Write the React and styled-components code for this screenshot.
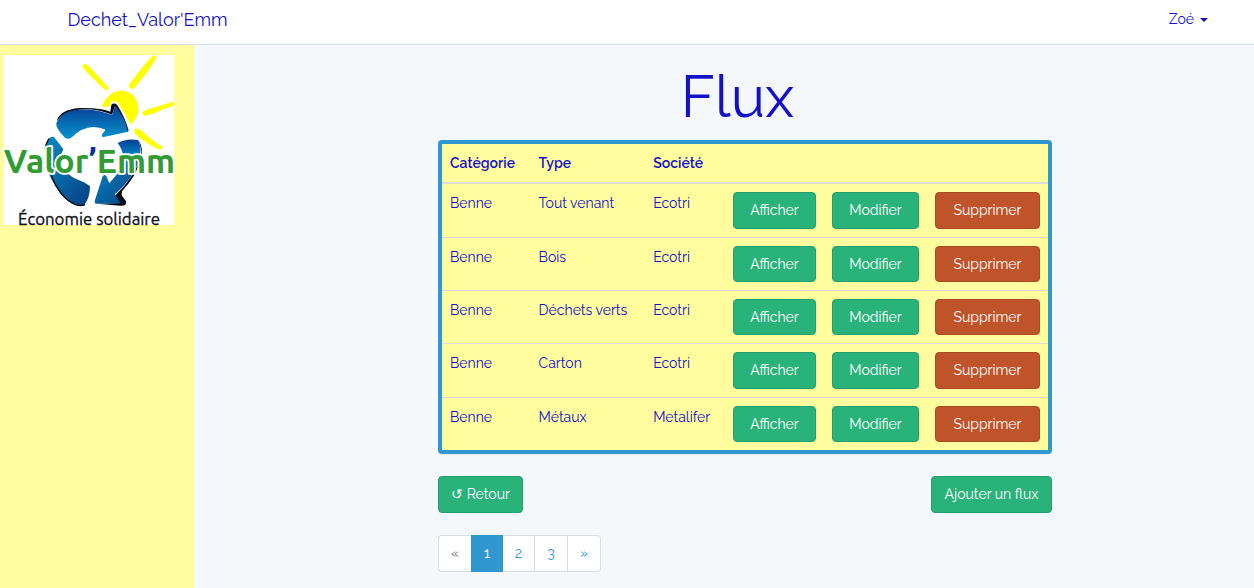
import React from "react";
import styled, { createGlobalStyle } from "styled-components";

const GlobalStyle = createGlobalStyle`
  *, *::before, *::after { box-sizing: border-box; }
  body {
    margin: 0;
    background: #f5f8fa;
    color: #1311cc;
    font-family: Raleway, Lato, "Open Sans", sans-serif;
    font-size: 14px;
    font-weight: 400;
    line-height: 1.6;
  }
`;

const Page = styled.div`
  display: flex;
  flex-direction: column;
  height: 588px;
  overflow: hidden;
`;

const Navbar = styled.header`
  display: flex;
  flex: none;
  align-items: flex-start;
  justify-content: space-between;
  height: 45px;
  padding: 5px 46px 0 67.5px;
  background: #fff;
  border-bottom: 1px solid #d3e0e9;
`;

const Brand = styled.a`
  font-size: 18px;
  line-height: 29px;
`;

const UserMenu = styled.a`
  display: flex;
  align-items: center;
  gap: 6px;
  line-height: 28px;
`;

const Caret = styled.span`
  border-top: 4px solid;
  border-left: 4px solid transparent;
  border-right: 4px solid transparent;
  margin-top: 2px;
`;

const Text = styled.span`
  white-space: nowrap;
`;

const Body = styled.div`
  display: flex;
  flex: 1;
`;

const Sidebar = styled.aside`
  width: 194px;
  padding: 10px 4px;
  background: #fffd9e;
`;

const Logo = styled.svg`
  display: block;
  width: 170px;
  height: 170px;
  background: #fff;
  overflow: visible;
`;

const Content = styled.main`
  width: 614px;
  margin-left: 244px;
`;

const Title = styled.h1`
  margin: 17px 0 8px;
  padding-right: 15px;
  font-size: 58px;
  font-weight: 400;
  line-height: 70px;
  text-align: center;
`;

const Panel = styled.section`
  height: 314px;
  border: 4px solid #3097d1;
  border-radius: 4px;
  background: #fffd9e;
  box-shadow: 0 1px 1px rgba(0, 0, 0, 0.05);
`;

const Table = styled.table`
  width: 606px;
  table-layout: fixed;
  border-collapse: collapse;
`;

const Col = styled.col`
  width: ${(p) => p.$w}px;
`;

const HeadCell = styled.th`
  padding: 8px;
  border-bottom: 2px solid #ddd;
  font-weight: 600;
  line-height: 22.4px;
  text-align: left;
`;

const Cell = styled.td`
  padding: 8px;
  border-top: 1px solid #ddd;
  line-height: 22.7px;
  vertical-align: top;
`;

const Button = styled.button`
  display: block;
  width: ${(p) => (p.$w ? `${p.$w}px` : "100%")};
  height: ${(p) => p.$h || 36.33}px;
  padding: ${(p) => (p.$h ? 0 : "0.25px 0 0")};
  border: 1px solid ${(p) => (p.$danger ? "#aa4a24" : "#259d6d")};
  border-radius: 4px;
  background: ${(p) => (p.$danger ? "#bf5329" : "#2ab27b")};
  color: #fff;
  font: inherit;
  text-align: center;
`;

const Actions = styled.div`
  display: flex;
  justify-content: space-between;
  margin: 22px 0;
`;

const Pagination = styled.ul`
  display: flex;
  width: 163px;
  height: 37px;
  margin: 0;
  padding: 0;
  list-style: none;
`;

const PageItem = styled.li`
  display: flex;
  align-items: center;
  justify-content: center;
  width: ${(p) => p.$w}px;
  border: 1px solid ${(p) => (p.$active ? "#3097d1" : "#ddd")};
  border-left-width: ${(p) => (p.$first || p.$active ? 1 : 0)}px;
  border-right-width: ${(p) => (p.$first ? 0 : 1)}px;
  border-radius: ${(p) => (p.$first ? "4px 0 0 4px" : p.$last ? "0 4px 4px 0" : 0)};
  background: ${(p) => (p.$active ? "#3097d1" : "#fff")};
  color: ${(p) => (p.$active ? "#fff" : p.$first ? "#777" : "#3097d1")};
`;

const rows = [
  ["Tout venant", "Ecotri"],
  ["Bois", "Ecotri"],
  ["Déchets verts", "Ecotri"],
  ["Carton", "Ecotri"],
  ["Métaux", "Metalifer"],
];

function ValorLogo() {
  return (
    <Logo viewBox="12 45 510 510">
      <defs>
        <linearGradient id="down" x1="0" y1="0" x2="0" y2="1">
          <stop offset="0" stopColor="#083f98" />
          <stop offset="1" stopColor="#0794cd" />
        </linearGradient>
        <linearGradient id="up" x1="0" y1="0" x2="1" y2="1">
          <stop offset="0" stopColor="#078bc6" />
          <stop offset="1" stopColor="#063e83" />
        </linearGradient>
      </defs>
      <g fill="#ff0" stroke="#ff0" strokeWidth="3" strokeLinejoin="round">
        <path d="M306 201 Q324 153 366 153 Q414 160 414 207 Q410 240 386 257 Q379 222 349 194 Q334 190 328 205Z" />
        <path d="M249 76 Q253 69 262 76 L324 142 Q325 150 316 149 Q284 121 250 83Z" />
        <path d="M456 50 Q465 42 468 51 Q452 87 402 142 Q392 150 387 138 Q402 112 456 50Z" />
        <path d="M429 215 Q475 199 520 187 L520 196 Q489 204 465 218 L434 226 Q424 223 429 215Z" />
        <path d="M404 269 Q412 263 424 273 Q451 301 485 320 Q488 327 479 328 Q438 311 405 279Z" />
      </g>
      <path d="M304 206 L334 202 L337 188 L350 190 L387 252 L390 277" fill="none" stroke="#fff" strokeWidth="8" />
      <g strokeLinejoin="round">
        <path fill="#050b15" d="M170 243 Q180 209 239 204 Q298 202 331 215 L334 194 Q342 187 351 194 Q373 227 386 271 L382 277 Q376 240 345 199 L336 224 Q285 204 235 209 Q190 216 170 243Z" />
        <path fill="url(#down)" d="M169 249 Q184 213 235 209 Q289 205 336 225 L345 199 Q374 230 384 275 L308 292 L305 284 L317 269 Q261 244 213 294 Q203 299 195 293 Q166 264 169 249Z" />
        <path fill="url(#up)" d="M144 298 Q152 288 162 291 L190 328 Q177 354 184 377 Q203 405 227 416 Q260 429 270 439 Q270 475 252 496 Q216 501 185 466 Q142 410 136 357 Q132 330 144 298Z" />
        <path fill="none" stroke="#050b15" strokeWidth="4" d="M136 328 Q138 306 148 296 M153 405 Q180 473 226 494 Q243 499 255 494" />
        <path fill="#050b15" d="M413 298 Q435 324 419 365 Q411 404 366 454 L365 466 L378 484 Q382 499 360 497 L291 491 L359 489 L344 469 Q404 409 421 355 Q427 323 413 298Z" />
        <path fill="url(#down)" d="M353 309 Q382 293 415 301 Q426 327 417 359 L370 359 Q371 333 353 309Z" />
        <path fill="url(#up)" d="M370 345 L419 353 Q404 411 344 463 L362 490 L289 491 Q282 491 285 480 L308 409 Q315 401 320 410 L328 430 Q370 386 370 345Z" />
      </g>
      <text x="11" y="399" textLength="514" lengthAdjust="spacingAndGlyphs" fontFamily="Ubuntu, Open Sans, sans-serif" fontWeight="700" fontSize="101" fill="#339b33" stroke="#fff" strokeWidth="11" strokeLinejoin="round" paintOrder="stroke">
        Valor<tspan fill="#082e9c">’</tspan>Emm
      </text>
      <text x="54" y="555" textLength="426" lengthAdjust="spacingAndGlyphs" fontFamily="Ubuntu, Noto Sans, sans-serif" fontWeight="400" fontSize="50" fill="#111" stroke="#111" strokeWidth="1">Économie solidaire</text>
    </Logo>
  );
}

export default function App() {
  return (
    <>
      <GlobalStyle />
      <Page>
        <Navbar>
          <Brand><Text>Dechet_Valor'Emm</Text></Brand>
          <UserMenu><Text>Zoé</Text><Caret /></UserMenu>
        </Navbar>
        <Body>
          <Sidebar><ValorLogo /></Sidebar>
          <Content>
            <Title><Text>Flux</Text></Title>
            <Panel>
              <Table>
                <colgroup>
                  {[88.6, 114.6, 79.8, 99, 103, 121].map((w, i) => <Col key={i} $w={w} />)}
                </colgroup>
                <thead>
                  <tr>
                    <HeadCell><Text>Catégorie</Text></HeadCell>
                    <HeadCell><Text>Type</Text></HeadCell>
                    <HeadCell><Text>Société</Text></HeadCell>
                    <HeadCell /><HeadCell /><HeadCell />
                  </tr>
                </thead>
                <tbody>
                  {rows.map(([type, company]) => (
                    <tr key={type}>
                      <Cell><Text>Benne</Text></Cell>
                      <Cell><Text>{type}</Text></Cell>
                      <Cell><Text>{company}</Text></Cell>
                      <Cell><Button><Text>Afficher</Text></Button></Cell>
                      <Cell><Button><Text>Modifier</Text></Button></Cell>
                      <Cell><Button $danger><Text>Supprimer</Text></Button></Cell>
                    </tr>
                  ))}
                </tbody>
              </Table>
            </Panel>
            <Actions>
              <Button $w={85} $h={37}><Text>↺ Retour</Text></Button>
              <Button $w={121} $h={37}><Text>Ajouter un flux</Text></Button>
            </Actions>
            <Pagination>
              <PageItem $w={33} $first>«</PageItem>
              <PageItem $w={32} $active>1</PageItem>
              <PageItem $w={32}>2</PageItem>
              <PageItem $w={33}>3</PageItem>
              <PageItem $w={33} $last>»</PageItem>
            </Pagination>
          </Content>
        </Body>
      </Page>
    </>
  );
}
